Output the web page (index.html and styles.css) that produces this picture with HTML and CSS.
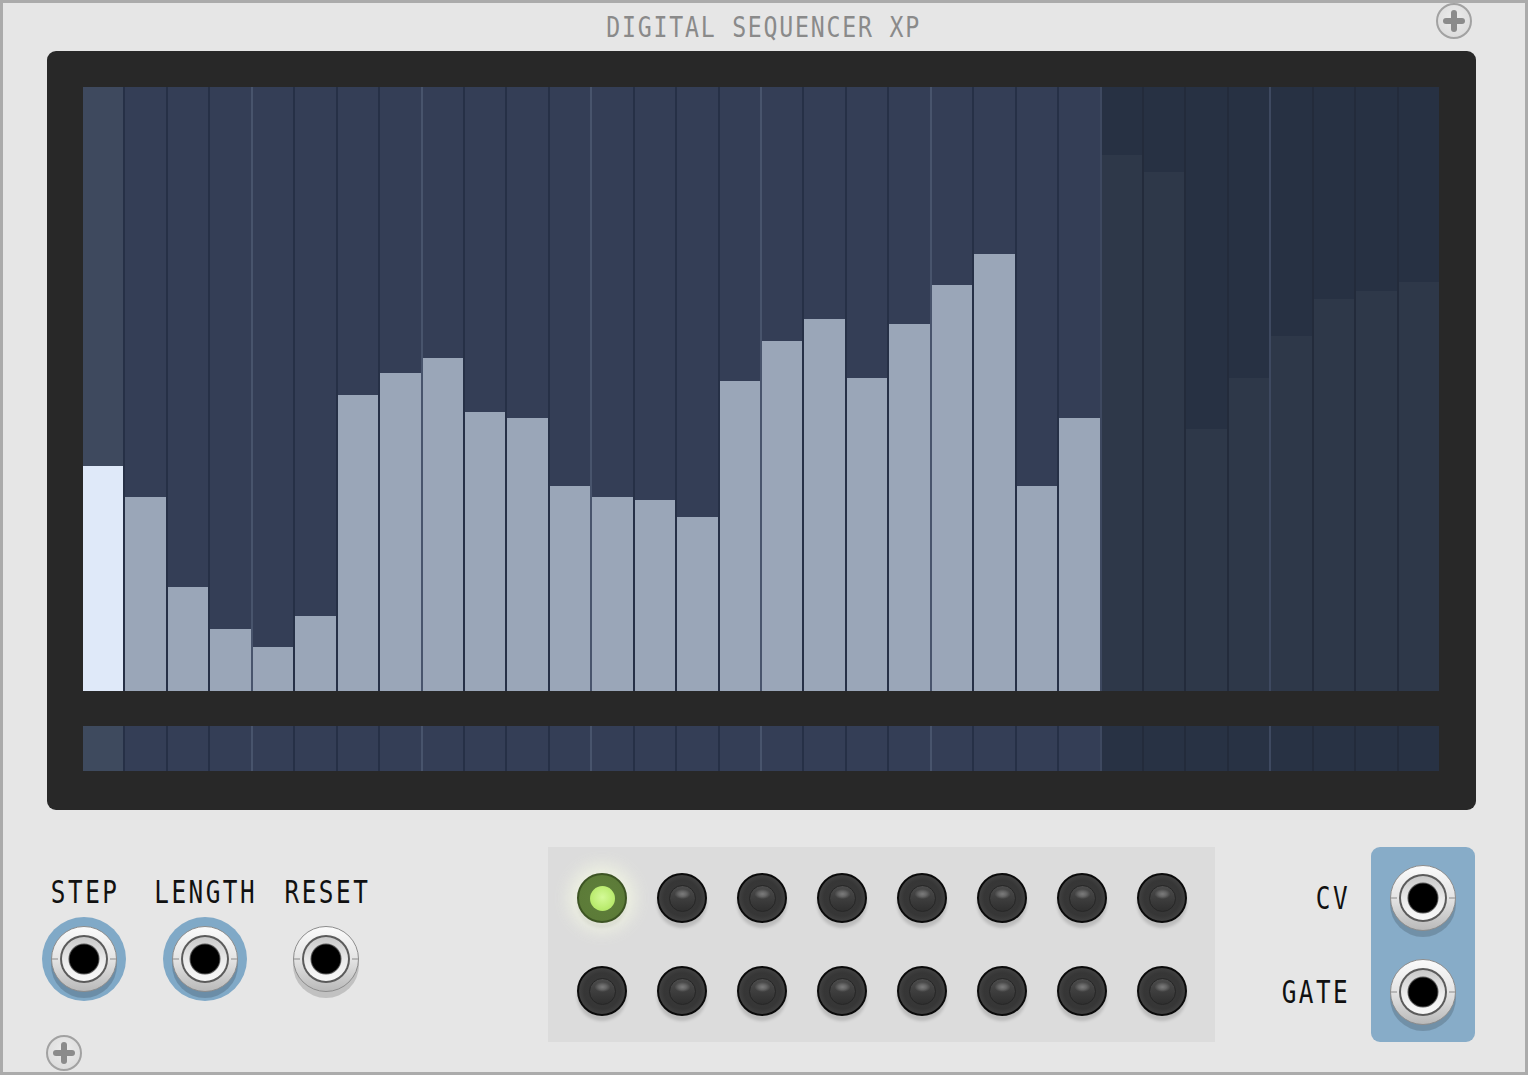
FILE: index.html
```html
<!DOCTYPE html>
<html>
<head>
<meta charset="utf-8">
<link rel="stylesheet" href="styles.css">
</head>
<body>
<svg class="defs" width="0" height="0" aria-hidden="true">
  <defs>
    <linearGradient id="metalOuter" x1="0" y1="0" x2="0" y2="1">
      <stop offset="0" stop-color="#fbfbfb"/>
      <stop offset="0.5" stop-color="#e4e4e4"/>
      <stop offset="1" stop-color="#b9b9b9"/>
    </linearGradient>
    <linearGradient id="metalInner" x1="0" y1="0" x2="0" y2="1">
      <stop offset="0" stop-color="#c9c9c9"/>
      <stop offset="0.55" stop-color="#ececec"/>
      <stop offset="1" stop-color="#f8f8f8"/>
    </linearGradient>
    <symbol id="jack" viewBox="0 0 66 66" overflow="visible">
      <circle cx="33" cy="39" r="33" fill="rgba(0,0,0,0.16)"/>
      <circle cx="33" cy="33" r="32.5" fill="url(#metalOuter)" stroke="#8c8c8c" stroke-width="1"/>
      <line x1="1" y1="33" x2="7" y2="33" stroke="#9a9a9a" stroke-width="1.2"/>
      <line x1="59" y1="33" x2="65" y2="33" stroke="#9a9a9a" stroke-width="1.2"/>
      <circle cx="33" cy="33" r="24" fill="#5b5b5b"/>
      <circle cx="33" cy="33" r="22" fill="url(#metalInner)"/>
      <circle cx="33" cy="33" r="15.5" fill="#555"/>
      <circle cx="33" cy="33" r="14.5" fill="#000"/>
    </symbol>
  </defs>
</svg>

<div class="panel">
  <div class="screw screw-tr"></div>
  <div class="screw screw-bl"></div>

  <header class="header">
    <h1 class="title">DIGITAL SEQUENCER XP</h1>
  </header>

  <section class="display">
    <div class="bars">
      <div class="col active"><div class="fill" style="height:225px"></div></div>
      <div class="col"><div class="fill" style="height:194px"></div></div>
      <div class="col"><div class="fill" style="height:104px"></div></div>
      <div class="col"><div class="fill" style="height:62px"></div></div>
      <div class="col beat"><div class="fill" style="height:44px"></div></div>
      <div class="col"><div class="fill" style="height:75px"></div></div>
      <div class="col"><div class="fill" style="height:296px"></div></div>
      <div class="col"><div class="fill" style="height:318px"></div></div>
      <div class="col beat"><div class="fill" style="height:333px"></div></div>
      <div class="col"><div class="fill" style="height:279px"></div></div>
      <div class="col"><div class="fill" style="height:273px"></div></div>
      <div class="col"><div class="fill" style="height:205px"></div></div>
      <div class="col beat"><div class="fill" style="height:194px"></div></div>
      <div class="col"><div class="fill" style="height:191px"></div></div>
      <div class="col"><div class="fill" style="height:174px"></div></div>
      <div class="col"><div class="fill" style="height:310px"></div></div>
      <div class="col beat"><div class="fill" style="height:350px"></div></div>
      <div class="col"><div class="fill" style="height:372px"></div></div>
      <div class="col"><div class="fill" style="height:313px"></div></div>
      <div class="col"><div class="fill" style="height:367px"></div></div>
      <div class="col beat"><div class="fill" style="height:406px"></div></div>
      <div class="col"><div class="fill" style="height:437px"></div></div>
      <div class="col"><div class="fill" style="height:205px"></div></div>
      <div class="col"><div class="fill" style="height:273px"></div></div>
      <div class="col beat dim"><div class="fill" style="height:536px"></div></div>
      <div class="col dim"><div class="fill" style="height:519px"></div></div>
      <div class="col dim"><div class="fill" style="height:262px"></div></div>
      <div class="col dim"><div class="fill" style="height:313px"></div></div>
      <div class="col beat dim"><div class="fill" style="height:355px"></div></div>
      <div class="col dim"><div class="fill" style="height:392px"></div></div>
      <div class="col dim"><div class="fill" style="height:400px"></div></div>
      <div class="col dim"><div class="fill" style="height:409px"></div></div>
    </div>
    <div class="strip">
      <div class="cell active"></div><div class="cell"></div><div class="cell"></div><div class="cell"></div>
      <div class="cell beat"></div><div class="cell"></div><div class="cell"></div><div class="cell"></div>
      <div class="cell beat"></div><div class="cell"></div><div class="cell"></div><div class="cell"></div>
      <div class="cell beat"></div><div class="cell"></div><div class="cell"></div><div class="cell"></div>
      <div class="cell beat"></div><div class="cell"></div><div class="cell"></div><div class="cell"></div>
      <div class="cell beat"></div><div class="cell"></div><div class="cell"></div><div class="cell"></div>
      <div class="cell beat dim"></div><div class="cell dim"></div><div class="cell dim"></div><div class="cell dim"></div>
      <div class="cell beat dim"></div><div class="cell dim"></div><div class="cell dim"></div><div class="cell dim"></div>
    </div>
  </section>

  <section class="controls">
    <div class="inputs">
      <div class="input">
        <div class="label"><span>STEP</span></div>
        <div class="ring blue"><svg class="jack" viewBox="0 0 66 66"><use href="#jack"/></svg></div>
      </div>
      <div class="input">
        <div class="label"><span>LENGTH</span></div>
        <div class="ring blue"><svg class="jack" viewBox="0 0 66 66"><use href="#jack"/></svg></div>
      </div>
      <div class="input">
        <div class="label"><span>RESET</span></div>
        <div class="ring"><svg class="jack" viewBox="0 0 66 66"><use href="#jack"/></svg></div>
      </div>
    </div>

    <div class="pads">
      <div class="btn led"></div><div class="btn"></div><div class="btn"></div><div class="btn"></div>
      <div class="btn"></div><div class="btn"></div><div class="btn"></div><div class="btn"></div>
      <div class="btn"></div><div class="btn"></div><div class="btn"></div><div class="btn"></div>
      <div class="btn"></div><div class="btn"></div><div class="btn"></div><div class="btn"></div>
    </div>

    <div class="outputs">
      <div class="out-labels">
        <div class="out-label"><span>CV</span></div>
        <div class="out-label"><span>GATE</span></div>
      </div>
      <div class="out-box">
        <svg class="jack" viewBox="0 0 66 66"><use href="#jack"/></svg>
        <svg class="jack" viewBox="0 0 66 66"><use href="#jack"/></svg>
      </div>
    </div>
  </section>
</div>
</body>
</html>
```

FILE: styles.css
```css
html, body {
  margin: 0;
  padding: 0;
  background: #e6e6e6;
}

.defs {
  position: absolute;
  width: 0;
  height: 0;
  overflow: hidden;
}

.panel {
  position: relative;
  width: 1528px;
  height: 1075px;
  box-sizing: border-box;
  border: 3px solid #ababab;
  background: #e6e6e6;
  font-family: "DejaVu Sans Mono", "Liberation Mono", monospace;
  overflow: hidden;
}

/* screws */
.screw {
  position: absolute;
  width: 36px;
  height: 36px;
  box-sizing: border-box;
  border-radius: 50%;
  border: 2px solid #a2a2a2;
  background: radial-gradient(circle at 50% 40%, #ececec 0, #dedede 70%, #d2d2d2 100%);
}
.screw::before,
.screw::after {
  content: "";
  position: absolute;
  left: 50%;
  top: 50%;
  background: #8b8b8b;
  border-radius: 3px;
}
.screw::before {
  width: 22px;
  height: 6px;
  margin: -3px 0 0 -11px;
}
.screw::after {
  width: 6px;
  height: 22px;
  margin: -11px 0 0 -3px;
}
.screw-tr { left: 1433px; top: 0px; }
.screw-bl { left: 43px; top: 1032px; }

/* header */
.header {
  height: 48px;
  display: flex;
  justify-content: center;
}
.title {
  margin: 0;
  font-size: 29px;
  line-height: 48px;
  font-weight: normal;
  color: #8a8a8a;
  letter-spacing: 2.2px;
  white-space: nowrap;
  transform: scaleX(0.8);
}

/* display */
.display {
  margin-left: 44px;
  width: 1429px;
  height: 759px;
  box-sizing: border-box;
  padding: 36px 37px 39px 36px;
  background: #282828;
  border-radius: 9px;
  display: flex;
  flex-direction: column;
  gap: 35px;
}
.bars {
  height: 604px;
  display: flex;
}
.col {
  flex: 1 1 0;
  min-width: 0;
  display: flex;
  flex-direction: column;
  justify-content: flex-end;
  background: #343e56;
  border-left: 2px solid #263046;
}
.col.active {
  background: #3e495e;
  border-left: none;
}
.col.beat { border-left-color: #48546c; }
.fill { background: #9aa6b8; }
.col.active .fill { background: #dfe9f9; }
.col.dim { background: #273143; border-left-color: #232b3b; }
.col.dim.beat { border-left-color: #3e4960; }
.col.dim .fill { background: #2e3849; }

.strip {
  height: 45px;
  display: flex;
}
.cell {
  flex: 1 1 0;
  min-width: 0;
  background: #343e56;
  border-left: 2px solid #263046;
}
.cell.active { background: #3e4a5e; border-left: none; }
.cell.beat { border-left-color: #48546c; }
.cell.dim { background: #283244; border-left-color: #232b3b; }
.cell.dim.beat { border-left-color: #3e4960; }

/* controls */
.controls {
  margin-top: 37px;
  height: 195px;
  display: flex;
  align-items: flex-start;
}
.inputs {
  margin-left: 20px;
  padding-top: 29px;
  display: flex;
}
.input {
  width: 121px;
  display: flex;
  flex-direction: column;
  align-items: center;
}
.label {
  height: 32px;
  display: flex;
  justify-content: center;
  margin-bottom: 9px;
}
.label span,
.out-label span {
  display: inline-block;
  font-size: 32px;
  line-height: 32px;
  color: #111;
  white-space: nowrap;
  letter-spacing: 3.3px;
  transform: scaleX(0.76);
}
.label span {
  margin-right: -3px;
}
.ring {
  width: 84px;
  height: 84px;
  border-radius: 50%;
  display: flex;
  align-items: center;
  justify-content: center;
}
.ring.blue {
  background: #80a9c7;
}
.jack {
  width: 66px;
  height: 66px;
  overflow: visible;
  display: block;
}

/* pads */
.pads {
  margin-left: 162px;
  width: 667px;
  height: 195px;
  box-sizing: border-box;
  padding: 26px 28px 26px 29px;
  background: #dcdcdc;
  display: grid;
  grid-template-columns: repeat(8, 50px);
  grid-template-rows: 50px 50px;
  column-gap: 30px;
  row-gap: 43px;
}
.btn {
  width: 50px;
  height: 50px;
  box-sizing: border-box;
  border-radius: 50%;
  border: 2px solid #0b0b0b;
  background: radial-gradient(circle at 50% 50%, #393939 0, #363636 55%, #474747 80%, #2b2b2b 100%);
  box-shadow: 0 5px 3px rgba(0, 0, 0, 0.14);
  display: flex;
  align-items: center;
  justify-content: center;
}
.btn::before {
  content: "";
  width: 27px;
  height: 27px;
  box-sizing: border-box;
  border-radius: 50%;
  border: 1px solid #262626;
  background:
    radial-gradient(ellipse 8px 5px at 50% 32%, #7c7c7c 0, #666 50%, rgba(80, 80, 80, 0) 100%),
    linear-gradient(#4c4c4c, #2f2f2f);
}
.btn.led {
  border-color: #3d5423;
  background: radial-gradient(circle at 50% 50%, #5f7f3b 0, #5c7b38 70%, #6b8a45 85%, #4a6629 100%);
  box-shadow: 0 0 18px 8px rgba(246, 250, 228, 0.75), 0 5px 3px rgba(0, 0, 0, 0.12);
}
.btn.led::before {
  width: 25px;
  height: 25px;
  border: none;
  background: radial-gradient(circle at 50% 45%, #d4fa98 0, #bbec70 60%, #a9de5e 100%);
}

/* outputs */
.outputs {
  margin-left: 52px;
  display: flex;
  gap: 24px;
}
.out-labels {
  width: 80px;
  padding-top: 18px;
  display: flex;
  flex-direction: column;
  gap: 28px;
}
.out-label {
  height: 66px;
  display: flex;
  align-items: center;
  justify-content: flex-end;
}
.out-label span {
  transform-origin: right center;
  margin-right: -3px;
}
.out-box {
  width: 104px;
  height: 195px;
  box-sizing: border-box;
  padding: 18px 0 17px;
  background: #87acc8;
  border-radius: 9px;
  display: flex;
  flex-direction: column;
  align-items: center;
  gap: 28px;
}
```
